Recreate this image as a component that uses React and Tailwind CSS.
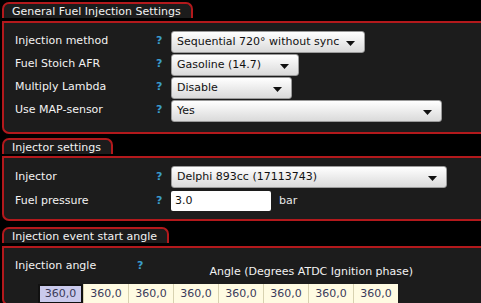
import React from 'react';

const Section = ({ title, children, className = '' }) => (
  <div className={className}>
    <div className="relative z-10 -mb-[2px] inline-block h-[16px] rounded-t-[7px] border-2 border-b-0 border-[#b3191c] bg-[#1c1c1c] pl-[8px] pr-[10px] pt-[1px] leading-[13px] text-[#f2f2f2]">
      {title}
    </div>
    <div className="rounded-bl-[7px] border-2 border-r-0 border-[#b3191c] bg-[#1c1c1c] pl-[11px]">
      {children}
    </div>
  </div>
);

const Caret = () => (
  <svg width="9" height="5" viewBox="0 0 9 5" className="absolute right-[9px] top-[9px]">
    <path d="M0 0h9L4.5 5z" fill="#111" />
  </svg>
);

const Select = ({ value, width }) => (
  <div
    className="relative h-[22px] rounded-[3px] border border-[#9a9a9a] bg-gradient-to-b from-[#ffffff] to-[#dadada] pl-[5px] leading-[20px] text-[#111]"
    style={{ width }}
  >
    {value}
    <Caret />
  </div>
);

const Help = ({ className = '' }) => (
  <span className={`font-bold text-[#3a9ccc] ${className}`}>?</span>
);

const Row = ({ label, children }) => (
  <div className="flex h-[22px] items-center">
    <div className="w-[140px] text-[#f2f2f2]">{label}</div>
    <div className="w-[16px] pl-[1px]">
      <Help />
    </div>
    {children}
  </div>
);

const angles = Array(8).fill('360,0');

export default function App() {
  return (
    <div className="h-[303px] overflow-hidden bg-black pl-[2px] pt-[2px] font-['DejaVu_Sans',sans-serif] text-[11px]">
      <Section title="General Fuel Injection Settings">
        <div className="flex flex-col gap-[1px] pb-[10px] pt-[8px]">
          <Row label="Injection method">
            <Select value="Sequential 720° without sync" width={194} />
          </Row>
          <Row label="Fuel Stoich AFR">
            <Select value="Gasoline (14.7)" width={128} />
          </Row>
          <Row label="Multiply Lambda">
            <Select value="Disable" width={121} />
          </Row>
          <Row label="Use MAP-sensor">
            <Select value="Yes" width={271} />
          </Row>
        </div>
      </Section>

      <Section title="Injector settings" className="mt-[4px]">
        <div className="flex flex-col gap-[2px] pb-[7px] pt-[8px]">
          <Row label="Injector">
            <Select value="Delphi 893cc (17113743)" width={276} />
          </Row>
          <Row label="Fuel pressure">
            <div className="h-[20px] w-[100px] rounded-[2px] bg-white pl-[4px] leading-[20px] text-[#111]">3.0</div>
            <span className="ml-[8px] text-[#e8e8e8]">bar</span>
          </Row>
        </div>
      </Section>

      <Section title="Injection event start angle" className="mt-[6px]">
        <div className="pt-[10px]">
          <div className="flex items-start">
            <div className="w-[122px] text-[#f2f2f2]">Injection angle</div>
            <Help className="text-[#2f7fae]" />
            <div className="ml-[66px] mt-[6px] text-[#f2f2f2]">Angle (Degrees ATDC Ignition phase)</div>
          </div>
          <div className="ml-[23px] mt-[4px] flex">
            {angles.map((a, i) => (
              <div
                key={i}
                className={
                  i === 0
                    ? 'h-[20px] w-[45px] border-2 border-[#111] bg-[#cacaec] text-center leading-[16px] text-[#3a3a5a]'
                    : 'h-[20px] w-[45px] border-l border-[#d8d2b0] bg-[#fffbe2] text-center leading-[20px] text-[#3a3a5a]'
                }
              >
                {a}
              </div>
            ))}
          </div>
        </div>
      </Section>
    </div>
  );
}
